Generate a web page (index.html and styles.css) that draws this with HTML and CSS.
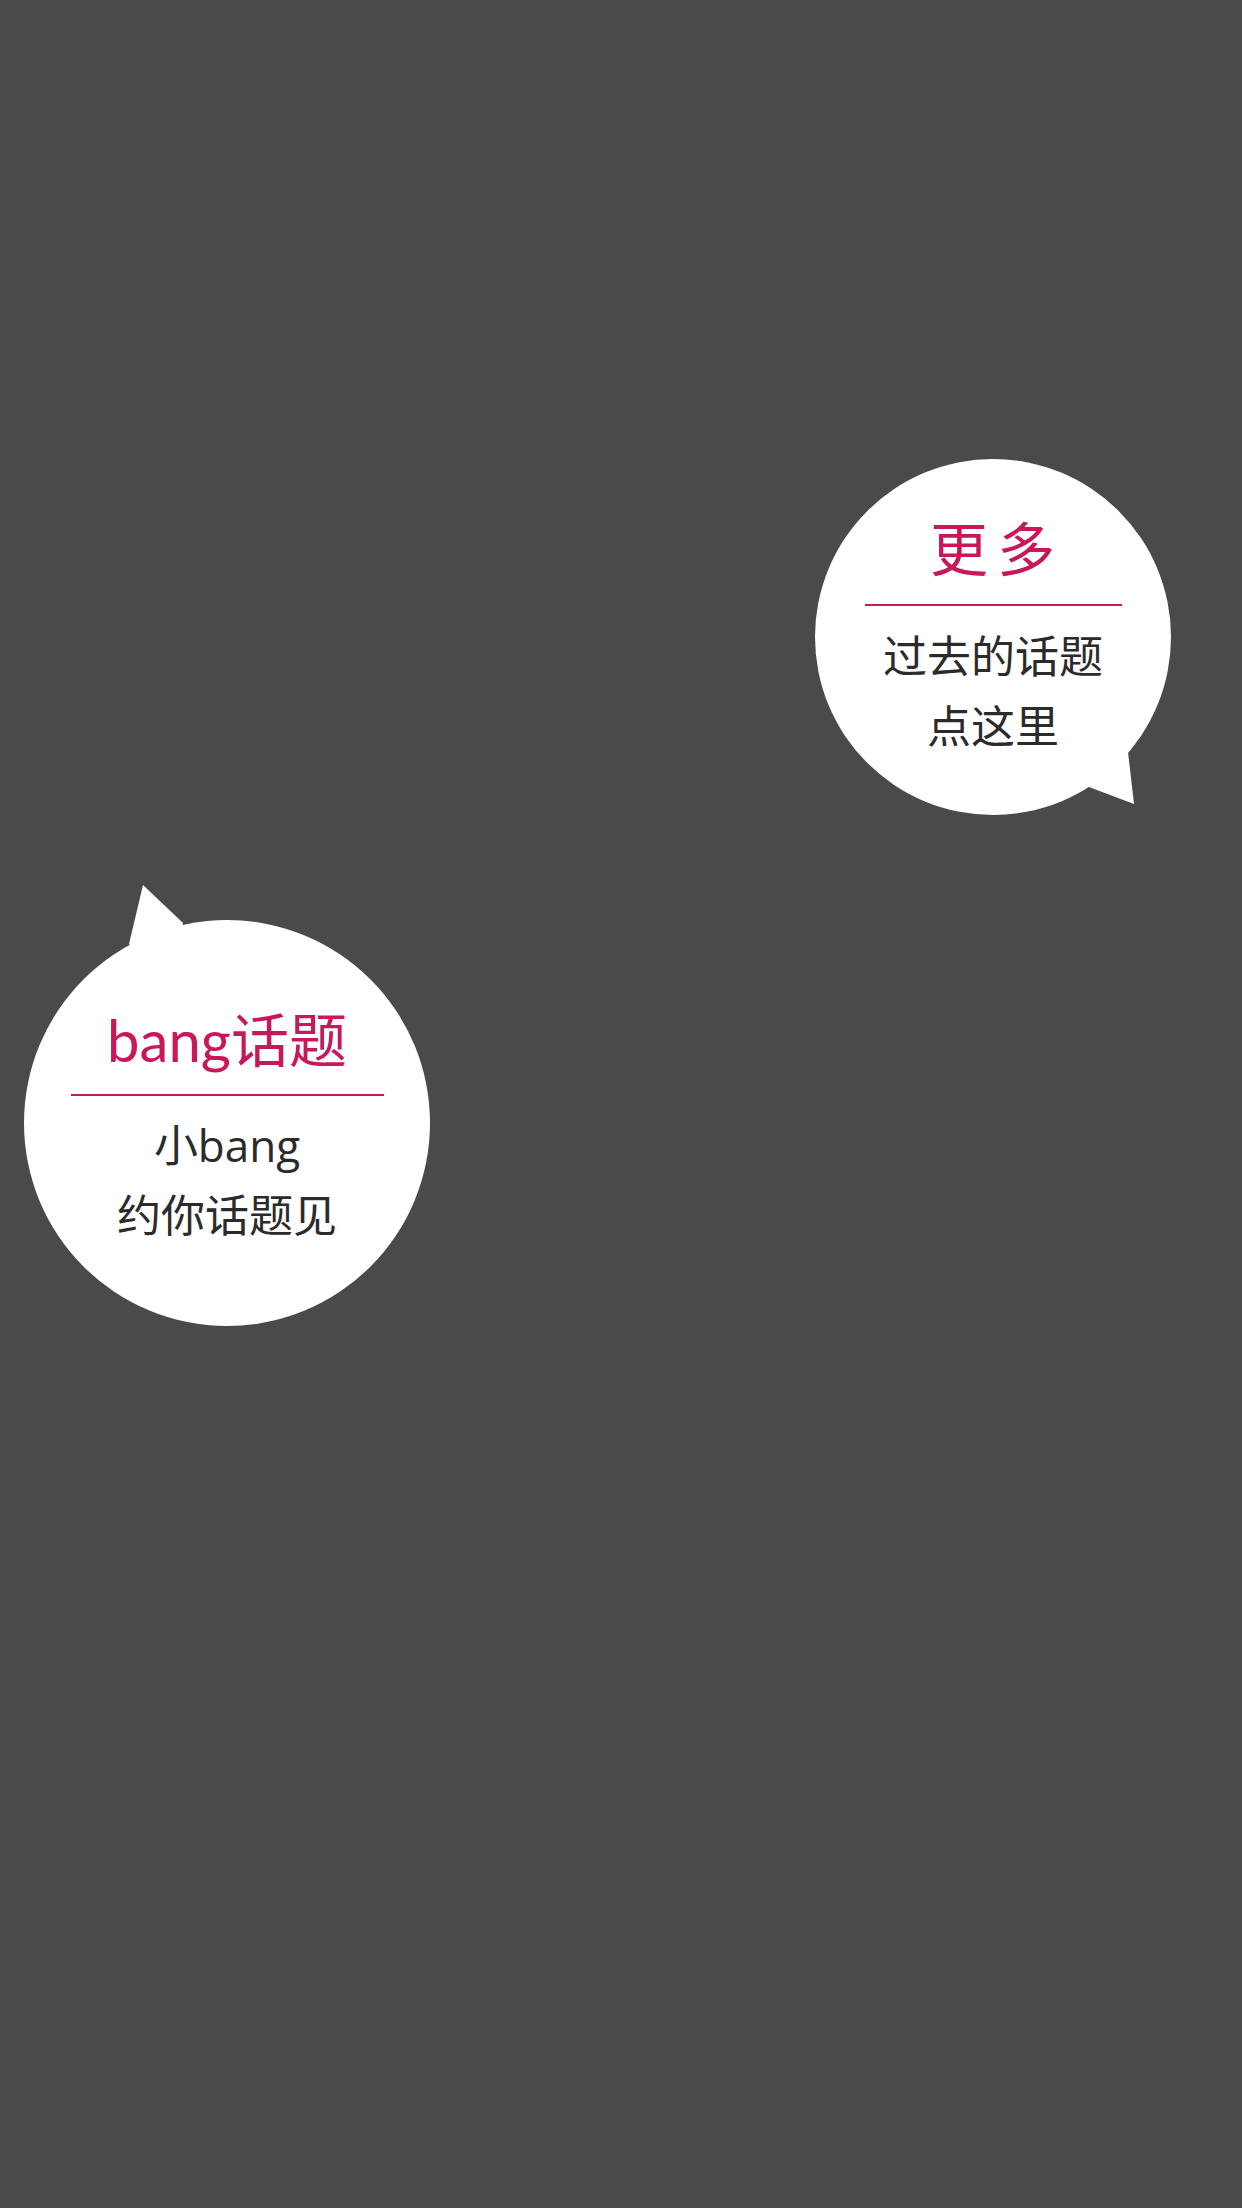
FILE: index.html
```html
<!DOCTYPE html>
<html lang="zh-CN">
<head>
<meta charset="utf-8">
<title>bang话题</title>
<link rel="stylesheet" href="styles.css">
</head>
<body>
<main class="page">
  <a class="bubble bubble-more" href="#">
    <svg class="tail" viewBox="0 0 356 356" aria-hidden="true">
      <polygon points="313,293 319,345 274,328 250,280" fill="#ffffff"/>
    </svg>
    <div class="bubble-title title-more">更 多</div>
    <div class="divider divider-more"></div>
    <div class="bubble-text">过去的话题</div>
    <div class="bubble-text">点这里</div>
  </a>
  <a class="bubble bubble-bang" href="#">
    <svg class="tail" viewBox="0 0 406 406" aria-hidden="true">
      <polygon points="105,24 119,-35 159,3 150,70" fill="#ffffff"/>
    </svg>
    <div class="bubble-title title-bang">bang话题</div>
    <div class="divider divider-bang"></div>
    <div class="bubble-text">小bang</div>
    <div class="bubble-text">约你话题见</div>
  </a>
</main>
</body>
</html>
```
FILE: styles.css
```css
html, body {
  margin: 0;
  padding: 0;
}
body {
  background: #4a4a4a;
  width: 1242px;
  height: 2208px;
  overflow: hidden;
  font-family: Lato, "Noto Sans CJK SC", sans-serif;
}
.page {
  display: flex;
  flex-direction: column;
  align-items: flex-start;
  padding-top: 459px;
}
.bubble {
  position: relative;
  display: flex;
  flex-direction: column;
  align-items: center;
  box-sizing: border-box;
  background: #ffffff;
  border-radius: 50%;
  text-decoration: none;
}
.tail {
  position: absolute;
  left: 0;
  top: 0;
  width: 100%;
  height: 100%;
  overflow: visible;
  z-index: 0;
}
.bubble > div {
  position: relative;
  z-index: 1;
}
.bubble-more {
  width: 356px;
  height: 356px;
  margin-left: 815px;
  padding-top: 60px;
}
.bubble-bang {
  width: 406px;
  height: 406px;
  margin-left: 24px;
  margin-top: 105px;
  padding-top: 90px;
}
.bubble-title {
  color: #c8175a;
  font-size: 58px;
  line-height: 60px;
  height: 60px;
  white-space: nowrap;
}
.title-more {
  letter-spacing: -3px;
  padding-right: 4px;
}
.divider {
  height: 2px;
  background: #c8175a;
  margin-top: 25px;
  margin-bottom: 15px;
}
.divider-more {
  width: 257px;
}
.divider-bang {
  width: 313px;
  margin-top: 24px;
  margin-bottom: 14px;
}
.bubble-text {
  color: #2b2b2b;
  font-family: "Open Sans", "Noto Sans CJK SC", sans-serif;
  font-size: 44px;
  line-height: 70px;
  height: 70px;
  white-space: nowrap;
}
```
